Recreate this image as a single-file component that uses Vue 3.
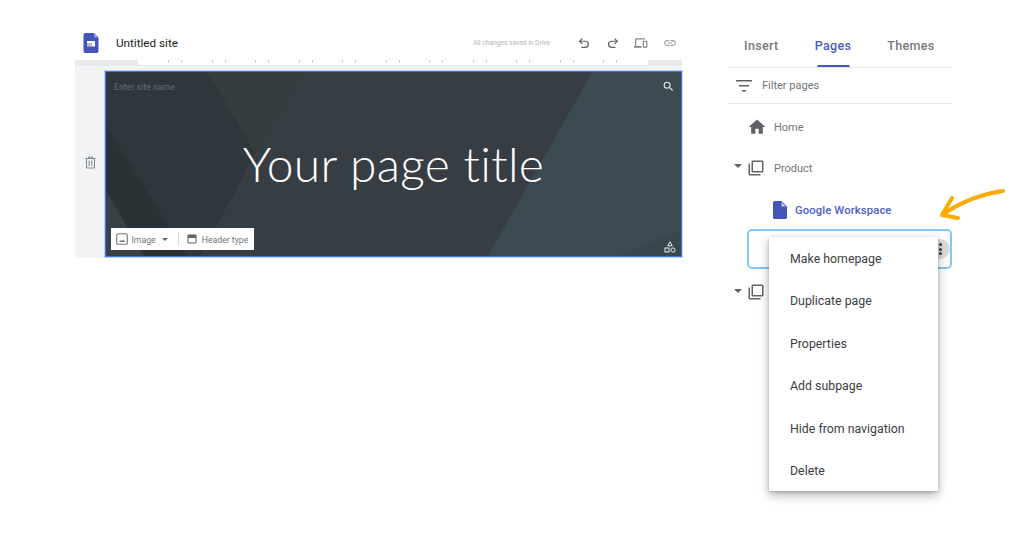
<script setup>
const rulerTicks = Array.from({ length: 22 }, (_, i) => i)
const menuItems = ['Make homepage', 'Duplicate page', 'Properties', 'Add subpage', 'Hide from navigation', 'Delete']
</script>

<template>
  <div class="page">
    <main class="editor">
      <header class="topbar">
        <svg class="logo" width="16" height="20" viewBox="0 0 16 20">
          <path d="M2.500 0H11L15.500 4.500V18a2 2 0 0 1-2 2h-11a2 2 0 0 1-2-2V2a2 2 0 0 1 2-2z" fill="#4355b9"/>
          <path d="M11 0L15.500 4.500H11z" fill="#8e9ae0"/>
          <rect x="4" y="8" width="8" height="5.500" fill="#fff"/>
          <rect x="4" y="10" width="5" height="3.500" fill="#4355b9" opacity=".4"/>
        </svg>
        <span class="site-title">Untitled site</span>
        <span class="saved">All changes saved in Drive</span>
        <div class="tools">
          <svg width="14" height="14" viewBox="-1.600 -1 16 16" fill="none" stroke="#5f6368" stroke-width="1.400"><path d="M5.500 2L2.500 5l3 3M2.500 5H9a3 3 0 0 1 0 7H4.500"/></svg>
          <svg width="14" height="14" viewBox="-2.500 -1 16 16" fill="none" stroke="#5f6368" stroke-width="1.400"><path d="M8.500 2l3 3-3 3M11.500 5H5a3 3 0 0 0 0 7h4.500"/></svg>
          <svg width="14" height="14" viewBox="0 0 24 24"><path fill="#80868b" d="M4 6h15V4H4c-1.100 0-2 .9-2 2v11H0v3h13v-3H4V6zm18 2h-6c-.55 0-1 .45-1 1v10c0 .55.45 1 1 1h6c.55 0 1-.45 1-1V9c0-.55-.45-1-1-1zm-1 10h-4v-8h4v8z"/></svg>
          <svg width="14" height="14" viewBox="0 0 24 24"><path fill="#9aa0a6" d="M3.900 12c0-1.710 1.390-3.100 3.100-3.100h4V7H7c-2.760 0-5 2.240-5 5s2.240 5 5 5h4v-1.900H7c-1.710 0-3.100-1.390-3.100-3.100zM8 13h8v-2H8v2zm9-6h-4v1.900h4c1.710 0 3.100 1.390 3.100 3.100s-1.390 3.100-3.100 3.100h-4V17h4c2.760 0 5-2.240 5-5s-2.240-5-5-5z"/></svg>
        </div>
      </header>
      <div class="ruler">
        <div class="ruler-track">
          <i v-for="t in rulerTicks" :key="t" class="tick"></i>
        </div>
      </div>
      <div class="canvas">
        <div class="gutter">
          <svg width="13" height="13" viewBox="0 0 13 13" fill="none" stroke="#80868b" stroke-width="1"><path d="M1.500 2.500h10M4.500 2.500v-1.500h4v1.500M2.500 2.500v9.500h8V2.500M5.200 4.500v5.500M7.800 4.500v5.500"/></svg>
        </div>
        <section class="hero">
          <svg class="hero-bg" viewBox="0 0 577 186" preserveAspectRatio="none">
            <rect width="577" height="186" fill="#2f373c"/>
            <polygon points="197,0 488,0 383,186 95,186 150,82" fill="#363d43"/>
            <polygon points="102,0 197,0 150,82" fill="#363d3f"/>
            <polygon points="0,54 82,186 38,186 0,120" fill="#2b3236"/>
            <polygon points="0,120 38,186 0,186" fill="#394144"/>
            <polygon points="488,0 577,0 577,186 383,186" fill="#3c4a52"/>
            <polygon points="577,160 577,186 515,186" fill="#39464d"/>
          </svg>
          <div class="hero-head">
            <span class="site-name">Enter site name</span>
            <svg width="13" height="13" viewBox="0 0 24 24"><path fill="#eceff1" d="M15.500 14h-.79l-.28-.27A6.470 6.470 0 0 0 16 9.500 6.500 6.500 0 1 0 9.500 16c1.610 0 3.090-.59 4.230-1.570l.27.28v.79l5 4.990L20.490 19l-4.990-5zm-6 0C7.010 14 5 11.990 5 9.500S7.010 5 9.500 5 14 7.010 14 9.500 11.990 14 9.500 14z"/></svg>
          </div>
          <h1 class="hero-title">Your page title</h1>
          <div class="hero-foot">
            <div class="hero-tools">
              <svg width="12" height="12" viewBox="0 0 12 12"><rect x=".7" y=".7" width="10.600" height="10.600" rx="1.300" fill="none" stroke="#70757a" stroke-width="1.100"/><path fill="#70757a" d="M3 9l1.500-2 1 1.200L7 6.500 9 9z"/></svg>
              <span>Image</span>
              <i class="caret small"></i>
              <i class="divider"></i>
              <svg width="12" height="12" viewBox="0 0 24 24"><path fill="#5f6368" d="M19 3H5a2 2 0 0 0-2 2v14a2 2 0 0 0 2 2h14a2 2 0 0 0 2-2V5a2 2 0 0 0-2-2zm0 16H5v-9h14v9z"/></svg>
              <span>Header type</span>
            </div>
            <svg class="shapes" width="12" height="12" viewBox="0 0 12 12" fill="none" stroke="#eceff1" stroke-width="1">
              <path d="M6 .8L8.200 4.800H3.800z"/>
              <rect x="1" y="7" width="4" height="4"/>
              <circle cx="9" cy="9" r="2.100"/>
            </svg>
          </div>
        </section>
      </div>
    </main>

    <aside class="panel">
      <nav class="tabs">
        <span class="tab">Insert</span>
        <span class="tab active">Pages</span>
        <span class="tab">Themes</span>
      </nav>
      <div class="filter">
        <svg width="16" height="12" viewBox="0 0 16 12"><path fill="#5f6368" d="M0 0h16v1.500H0zM3 5h10v1.500H3zM6 10h4v1.500H6z"/></svg>
        <span>Filter pages</span>
      </div>
      <ul class="tree">
        <li class="row home">
          <svg width="20" height="20" viewBox="0 0 24 24"><path fill="#5f6368" d="M10 20v-6h4v6h5v-8h3L12 3 2 12h3v8z"/></svg>
          <span>Home</span>
        </li>
        <li class="row product">
          <i class="caret"></i>
          <svg class="stack" width="18" height="18" viewBox="0 0 24 24"><path fill="#5f6368" d="M4 6H2v14c0 1.100.9 2 2 2h14v-2H4V6zm16-4H8c-1.100 0-2 .9-2 2v12c0 1.100.9 2 2 2h12c1.100 0 2-.9 2-2V4c0-1.100-.9-2-2-2zm0 14H8V4h12v12z"/></svg>
          <span>Product</span>
        </li>
        <li class="row sub">
          <svg width="14" height="18" viewBox="0 0 14 18"><path fill="#4355b9" d="M1.500 0H8.500L14 5.500V16.500a1.500 1.500 0 0 1-1.500 1.500h-11A1.500 1.500 0 0 1 0 16.500v-15A1.500 1.500 0 0 1 1.500 0z"/><path fill="#c4cbef" d="M8.500 1L13 5.500H8.500z"/></svg>
          <span>Google Workspace</span>
        </li>
        <li class="selected">
          <span class="more"><i></i><i></i><i></i></span>
        </li>
        <li class="row collapsed">
          <i class="caret"></i>
          <svg class="stack" width="18" height="18" viewBox="0 0 24 24"><path fill="#5f6368" d="M4 6H2v14c0 1.100.9 2 2 2h14v-2H4V6zm16-4H8c-1.100 0-2 .9-2 2v12c0 1.100.9 2 2 2h12c1.100 0 2-.9 2-2V4c0-1.100-.9-2-2-2zm0 14H8V4h12v12z"/></svg>
        </li>
      </ul>
      <ul class="menu">
        <li v-for="item in menuItems" :key="item">{{ item }}</li>
      </ul>
      <svg class="arrow" width="70" height="36" viewBox="0 0 70 36" fill="none" stroke="#f9ab00" stroke-width="4" stroke-linecap="round" stroke-linejoin="round">
        <path d="M65 5C50 7 28 13 5 28"/>
        <path d="M14 12L4 29L20 32"/>
      </svg>
    </aside>
  </div>
</template>

<style>
html, body { background: #fff; }
</style>

<style scoped>
.page {
  width: 1024px;
  height: 536px;
  display: flex;
  align-items: flex-start;
  padding: 25px 0 0 75px;
  box-sizing: border-box;
  overflow: hidden;
  font-family: Roboto, "Liberation Sans", sans-serif;
  background: #fff;
}
.editor { width: 607px; flex: none; }
.topbar {
  height: 35px;
  display: flex;
  align-items: center;
  box-sizing: border-box;
  padding-left: 8px;
}
.logo { flex: none; margin-top: 1px; }
.site-title { margin-left: 17px; font-size: 11.700px; color: #202124; }
.saved { margin-left: auto; font-size: 6.650px; color: #b0b4b8; }
.tools { display: flex; gap: 15px; margin-left: 26px; margin-right: 5px; }
.ruler {
  height: 6px;
  padding-left: 63px;
  padding-right: 34px;
  background: #e8eaed;
  box-sizing: border-box;
}
.ruler-track {
  height: 5px;
  background: #fff;
  display: flex;
  padding-left: 30px;
  overflow: hidden;
}
.tick { width: 30.500px; flex: none; border-left: 1px solid #c9ccd0; height: 3px; box-sizing: border-box; }
.tick:nth-child(odd) { width: 13px; }
.canvas { display: flex; height: 192px; background: #f1f3f4; }
.gutter {
  width: 30px;
  flex: none;
  display: flex;
  align-items: center;
  justify-content: center;
  padding-top: 1px;
  box-sizing: border-box;
}
.hero {
  position: relative;
  flex: 1;
  height: 186px;
  margin-top: 5px;
  box-sizing: border-box;
  border: 1px solid #3f78dc;
  box-shadow: 0 0 0 1px rgba(74, 128, 220, .3);
  display: flex;
  flex-direction: column;
  color: #fff;
}
.hero-bg { position: absolute; inset: 0; width: 100%; height: 100%; }
.hero-head {
  position: relative;
  display: flex;
  justify-content: space-between;
  align-items: center;
  padding: 8px 6px 0 8px;
}
.site-name { font-size: 8.800px; color: #666b6e; }
.hero-title {
  position: relative;
  margin: 43px 0 0;
  text-align: center;
  font-family: Lato, sans-serif;
  font-weight: 300;
  font-size: 48px;
  line-height: 56px;
  letter-spacing: .3px;
  color: #fff;
}
.hero-foot {
  position: relative;
  margin-top: auto;
  display: flex;
  align-items: flex-end;
  justify-content: space-between;
  padding: 0 5px 6px 5px;
}
.hero-tools {
  height: 22px;
  width: 143px;
  background: #fff;
  display: flex;
  align-items: center;
  padding-left: 5px;
  box-sizing: border-box;
  color: #70757a;
  font-size: 8.700px;
}
.hero-tools span { margin: 2px 0 0 3.500px; }
.caret {
  display: block;
  width: 0;
  height: 0;
  border-left: 4.500px solid transparent;
  border-right: 4.500px solid transparent;
  border-top: 4px solid #5f6368;
  flex: none;
  margin-top: -3px;
}
.caret.small {
  border-left-width: 3px;
  border-right-width: 3px;
  border-top-width: 3px;
  margin: 0 10px 0 6.500px;
}
.divider { width: 1px; height: 14px; background: #dadce0; margin-right: 7px; }
.shapes { margin-bottom: -3px; }

.panel {
  position: relative;
  width: 224px;
  flex: none;
  margin-left: 46px;
}
.tabs {
  height: 43px;
  display: flex;
  border-bottom: 1px solid #e8eaed;
  box-sizing: border-box;
  padding-left: 16px;
}
.tab {
  position: relative;
  font-size: 12.500px;
  font-weight: 500;
  letter-spacing: .35px;
  color: #74787d;
  margin-right: 36px;
  height: 42px;
  line-height: 42px;
  box-sizing: border-box;
}
.tab.active { color: #4a5cc0; }
.tab.active::after {
  content: "";
  position: absolute;
  left: 2px;
  right: 1px;
  bottom: 0;
  height: 2px;
  border-radius: 2px 2px 0 0;
  background: #4355b9;
}
.filter {
  height: 36px;
  display: flex;
  align-items: center;
  gap: 10px;
  padding-left: 8px;
  box-sizing: border-box;
  border-bottom: 1px solid #e8eaed;
  color: #70757a;
  font-size: 11px;
}
.tree { list-style: none; margin: 0; padding: 0; }
.row { display: flex; align-items: center; color: #70757a; font-size: 11px; height: 42px; box-sizing: border-box; }
.home { padding: 4px 0 0 19px; gap: 7px; margin-bottom: -1px; }
.product, .collapsed { padding-left: 6px; }
.product { padding-top: 3px; }
.product span, .sub span { margin-top: 2px; }
.stack { margin-left: 5px; margin-right: 9px; }
.sub { padding: 3px 0 0 45px; gap: 8px; color: #4f60c4; font-weight: 500; font-size: 11.300px; letter-spacing: .1px; }
.selected {
  margin: 0 0 0 19px;
  height: 40px;
  box-sizing: border-box;
  border: 2px solid #7fc9f8;
  border-radius: 5px;
  display: flex;
  align-items: center;
  justify-content: flex-end;
}
.more {
  width: 20px;
  height: 20px;
  border-radius: 50%;
  background: #dadce0;
  display: flex;
  flex-direction: column;
  align-items: center;
  justify-content: center;
  gap: 1.500px;
}
.more i { width: 3px; height: 3px; border-radius: 50%; background: #3c4043; }
.collapsed { padding-top: 4px; }
.menu {
  position: absolute;
  left: 41px;
  top: 212px;
  width: 169px;
  margin: 0;
  padding: 0;
  list-style: none;
  background: #fff;
  box-shadow: 0 4px 10px rgba(0,0,0,.3), 0 1px 3px rgba(0,0,0,.2);
  font-size: 12.350px;
  color: #3c4043;
}
.menu li {
  height: 42.400px;
  line-height: 44.400px;
  padding-left: 21px;
}
.arrow { position: absolute; left: 210px; top: 161px; }
</style>
